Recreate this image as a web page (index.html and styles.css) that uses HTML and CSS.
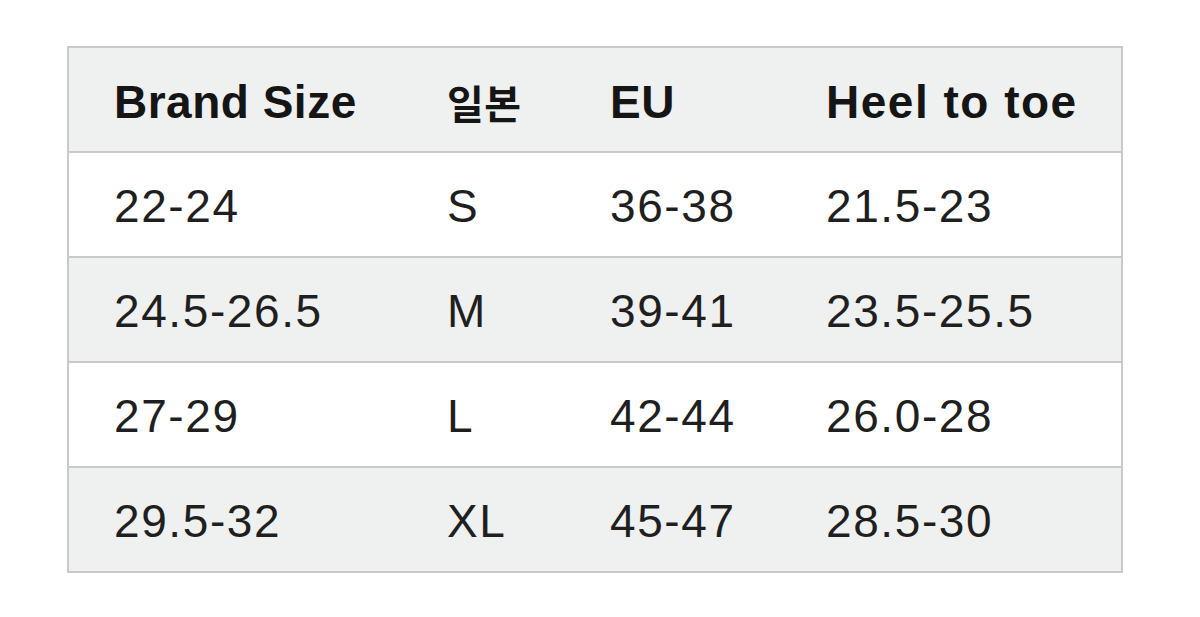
FILE: index.html
```html
<!DOCTYPE html>
<html lang="ko">
<head>
<meta charset="utf-8">
<link rel="stylesheet" href="styles.css">
</head>
<body>
<table class="size-table">
  <colgroup>
    <col class="c1"><col class="c2"><col class="c3"><col class="c4">
  </colgroup>
  <thead>
    <tr class="head"><th>Brand Size</th><th><span class="ko">일본</span></th><th>EU</th><th class="wide">Heel to toe</th></tr>
  </thead>
  <tbody>
    <tr><td>22-24</td><td>S</td><td>36-38</td><td>21.5-23</td></tr>
    <tr class="alt"><td>24.5-26.5</td><td>M</td><td>39-41</td><td>23.5-25.5</td></tr>
    <tr><td>27-29</td><td>L</td><td>42-44</td><td>26.0-28</td></tr>
    <tr class="alt"><td>29.5-32</td><td>XL</td><td>45-47</td><td>28.5-30</td></tr>
  </tbody>
</table>
</body>
</html>
```
FILE: styles.css
```css
html, body {
  margin: 0;
  padding: 0;
  background: #ffffff;
}
body {
  padding: 46px 0 0 67px;
  font-family: "Liberation Sans", "Noto Sans CJK KR", Arial, sans-serif;
}
.size-table {
  border-collapse: collapse;
  width: 1056px;
  table-layout: fixed;
  border: 2px solid #c9c9c9;
  color: #1f1f1f;
}
.c1 { width: 334px; }
.c2 { width: 163px; }
.c3 { width: 216px; }
.c4 { width: auto; }
.size-table th,
.size-table td {
  padding: 0 0 0 45px;
  text-align: left;
  vertical-align: middle;
  font-size: 46px;
  border-bottom: 2px solid #c9c9c9;
  white-space: nowrap;
}
.size-table th {
  font-weight: 700;
  color: #151515;
  letter-spacing: 0.5px;
  height: 98px;
  padding-top: 5px;
}
.size-table th.wide {
  letter-spacing: 1.5px;
}
.size-table td {
  font-weight: 400;
  letter-spacing: 1.6px;
  padding-top: 2px;
  height: 101px;
}
.ko {
  font-family: "Noto Sans CJK KR", sans-serif;
  font-size: 40px;
  font-weight: 700;
  letter-spacing: 0.5px;
}
.head, .alt {
  background: #eff0f0;
}
```
